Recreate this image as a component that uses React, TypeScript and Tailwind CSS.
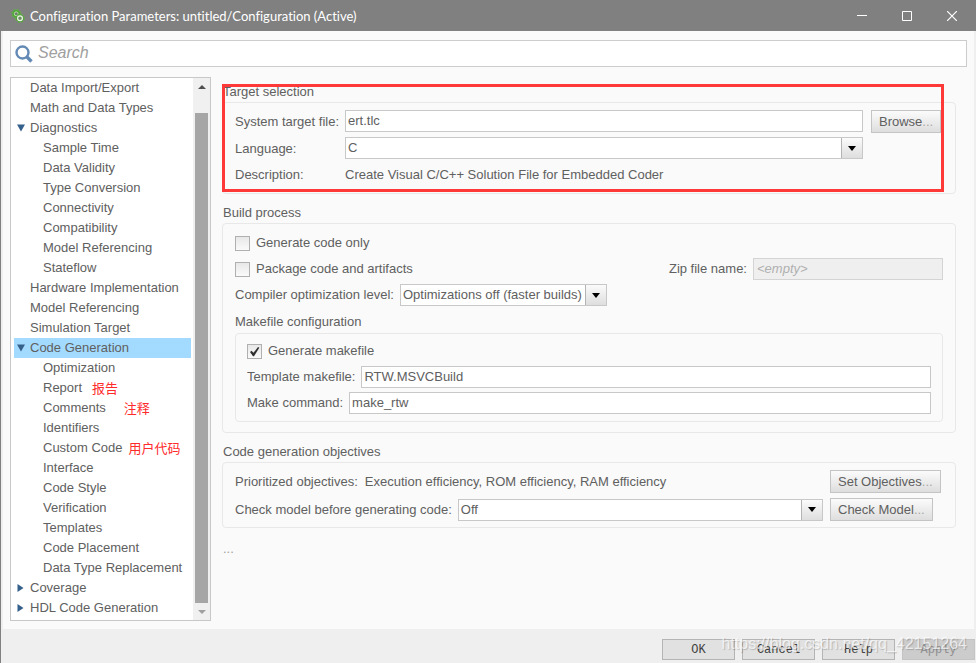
import type { ReactNode } from "react";
import clsx from "clsx";

type TreeItem = {
  label: string;
  level: 1 | 2;
  state?: "open" | "closed";
  selected?: boolean;
  note?: string;
  noteClass?: string;
};

const treeItems: TreeItem[] = [
  { label: "Data Import/Export", level: 1 },
  { label: "Math and Data Types", level: 1 },
  { label: "Diagnostics", level: 1, state: "open" },
  { label: "Sample Time", level: 2 },
  { label: "Data Validity", level: 2 },
  { label: "Type Conversion", level: 2 },
  { label: "Connectivity", level: 2 },
  { label: "Compatibility", level: 2 },
  { label: "Model Referencing", level: 2 },
  { label: "Stateflow", level: 2 },
  { label: "Hardware Implementation", level: 1 },
  { label: "Model Referencing", level: 1 },
  { label: "Simulation Target", level: 1 },
  { label: "Code Generation", level: 1, state: "open", selected: true },
  { label: "Optimization", level: 2 },
  { label: "Report", level: 2, note: "报告", noteClass: "ml-[10px]" },
  { label: "Comments", level: 2, note: "注释", noteClass: "ml-[18px]" },
  { label: "Identifiers", level: 2 },
  { label: "Custom Code", level: 2, note: "用户代码", noteClass: "ml-[6px]" },
  { label: "Interface", level: 2 },
  { label: "Code Style", level: 2 },
  { label: "Verification", level: 2 },
  { label: "Templates", level: 2 },
  { label: "Code Placement", level: 2 },
  { label: "Data Type Replacement", level: 2 },
  { label: "Coverage", level: 1, state: "closed" },
  { label: "HDL Code Generation", level: 1, state: "closed" },
];

const inputClass =
  "h-[22px] min-w-0 flex-1 border border-[#c8c8c8] bg-white px-[2px] pb-px text-[#606060] outline-none";

function TitleBar() {
  return (
    <header className="flex h-[31px] items-center bg-[#808080] pl-[10px] text-white">
      <svg width="14" height="14" viewBox="0 0 14 14" fill="none">
        <circle cx="5.2" cy="4.8" r="4.2" stroke="#5cb543" strokeWidth="1.2" strokeDasharray="1.9 1.4" />
        <circle cx="5.2" cy="4.8" r="3" stroke="#4fa836" strokeWidth="1.8" />
        <circle cx="5.2" cy="4.8" r="1.9" fill="#707a6c" stroke="#c8f0b8" strokeWidth=".8" />
        <circle cx="9" cy="9.2" r="4" stroke="#5cae42" strokeWidth="1.4" strokeDasharray="2 1.14" />
        <circle cx="9" cy="9.2" r="3.5" fill="#4a9a34" />
        <circle cx="9" cy="9.2" r="2.4" fill="#6f8a66" stroke="#eefbe8" strokeWidth="1.2" />
      </svg>
      <h1 className="ml-[5px] flex-1 font-['Lato','Open_Sans',sans-serif] text-[13px] leading-5 [font-variant-ligatures:none]">
        Configuration Parameters: untitled/Configuration (Active)
      </h1>
      <button aria-label="Minimize" className="flex h-full w-[45px] items-center justify-center">
        <svg width="10" height="10" viewBox="0 0 10 10" stroke="white">
          <path d="M0 4.5h10" />
        </svg>
      </button>
      <button aria-label="Maximize" className="flex h-full w-[45px] items-center justify-center">
        <svg width="10" height="10" viewBox="0 0 10 10" stroke="white" fill="none">
          <path d="M.5.5h9v9h-9z" />
        </svg>
      </button>
      <button aria-label="Close" className="mr-[2px] flex h-full w-[45px] items-center justify-center">
        <svg width="10" height="10" viewBox="0 0 10 10" stroke="white" strokeWidth="1.2">
          <path d="M0 0l10 10M10 0L0 10" />
        </svg>
      </button>
    </header>
  );
}

function TreeArrow({ state }: { state?: "open" | "closed" }) {
  return (
    <svg className="mr-[5px] shrink-0" width="8" height="8" viewBox="0 0 8 8" fill="#35608b">
      {state === "open" && <path d="M0 .5h8L4 7.5z" />}
      {state === "closed" && <path d="M0.5 0v8L6.5 4z" />}
    </svg>
  );
}

function Tree() {
  return (
    <nav className="flex w-[201px] shrink-0 border border-[#c8c8c8] bg-white">
      <ul className="min-w-0 flex-1 pb-[2px] pl-[3px] pr-[2px]">
        {treeItems.map((item, i) => (
          <li
            key={i}
            className={clsx(
              "flex h-5 items-center whitespace-nowrap leading-5",
              item.level === 1 ? "pl-[3px]" : "pl-4",
              item.selected && "bg-[#a3daff]"
            )}
          >
            <TreeArrow state={item.state} />
            <span>{item.label}</span>
            {item.note && (
              <span
                className={clsx(
                  "font-['Noto_Sans_CJK_SC',sans-serif] text-[13px] text-[#ff2a2a]",
                  item.noteClass
                )}
              >
                {item.note}
              </span>
            )}
          </li>
        ))}
      </ul>
      {/* Scrollbar */}
      <div className="flex w-[17px] flex-col items-center bg-[#f0f0f0]">
        <div className="flex h-[17px] items-center">
          <svg width="8" height="4" viewBox="0 0 8 4" fill="#505050">
            <path d="M4 0l4 4H0z" />
          </svg>
        </div>
        <div className="mt-[18px] w-[13px] flex-1 bg-[#a6a6a6]" />
        <div className="flex h-[17px] items-center">
          <svg width="8" height="4" viewBox="0 0 8 4" fill="#a0a0a0">
            <path d="M0 0h8L4 4z" />
          </svg>
        </div>
      </div>
    </nav>
  );
}

function Group({ title, className, children }: { title: string; className?: string; children: ReactNode }) {
  return (
    <section>
      <h2 className="h-5 pl-px leading-5">{title}</h2>
      <div className={clsx("flex flex-col rounded border border-[#e8e8e8]", className)}>{children}</div>
    </section>
  );
}

function PushButton({ children }: { children: string }) {
  return (
    <button className="h-[23px] border border-[#c4c4c4] bg-linear-to-b from-[#fbfbfb] to-[#dedede] px-[7px] leading-5 whitespace-nowrap">
      {children}
      <span className="text-[#a8a8a8]">...</span>
    </button>
  );
}

function SelectBox({ id, value, className }: { id: string; value: string; className?: string }) {
  return (
    <div className={clsx("flex h-[22px] border border-[#c8c8c8] bg-white", className)}>
      <select
        id={id}
        defaultValue={value}
        className="min-w-0 flex-1 appearance-none bg-transparent pb-px pl-[2px] text-[#606060] outline-none"
      >
        <option>{value}</option>
      </select>
      <div className="flex w-[21px] items-center justify-center border-l border-[#b4b4b4] bg-linear-to-b from-[#fbfbfb] to-[#dedede]">
        <svg width="8" height="5" viewBox="0 0 8 5" fill="black">
          <path d="M0 0h8L4 5z" />
        </svg>
      </div>
    </div>
  );
}

function CheckRow({ label, checked }: { label: string; checked?: boolean }) {
  return (
    <label className="flex h-[22px] items-center gap-[6px]">
      <span className="grid">
        <input
          type="checkbox"
          defaultChecked={checked}
          className="peer col-start-1 row-start-1 size-[15px] appearance-none border border-[#b0b0b0] bg-linear-to-b from-[#e8e8e8] to-[#fafafa]"
        />
        <svg
          className="pointer-events-none invisible col-start-1 row-start-1 peer-checked:visible"
          width="15"
          height="15"
          viewBox="0 0 15 15"
          fill="#303030"
        >
          <path d="M3 8l1.5-1.2 2 2L11 3l1.3.8L7 12.2H6z" />
        </svg>
      </span>
      {label}
    </label>
  );
}

function TextRow({ id, label, value }: { id: string; label: string; value: string }) {
  return (
    <div className="flex h-[22px] items-center gap-[6px]">
      <label htmlFor={id}>{label}</label>
      <input id={id} defaultValue={value} className={inputClass} />
    </div>
  );
}

export default function App() {
  return (
    <div className="flex min-h-screen flex-col border-l border-[#808080] bg-[#efefef] font-['Liberation_Sans',Arial,sans-serif] text-[13px] text-[#606060]">
      <TitleBar />

      <main className="mx-[2px] bg-[#fafafa] px-[7px] pb-2 pt-[9px]">
        <div className="flex h-[27px] items-center border border-[#cccccc] bg-white pl-1">
          <svg width="18" height="18" viewBox="0 0 18 18" fill="none" stroke="#6389b5">
            <circle cx="7.5" cy="7.5" r="6" strokeWidth="2.4" />
            <path d="M12 12l4.5 4.5" strokeWidth="3.4" />
          </svg>
          <input
            aria-label="Search"
            placeholder="Search"
            className="ml-[5px] min-w-0 flex-1 pb-px text-[16px] italic leading-5 outline-none placeholder:text-[#a0a0a0]"
          />
        </div>

        <div className="mt-[10px] flex gap-[11px]">
          <Tree />

          <div className="relative flex min-w-0 flex-1 flex-col gap-[9px] pr-[11px] pt-[5px]">
            <Group title="Target selection" className="gap-[5px] py-[7px] pl-3 pr-[14px]">
              <div className="flex h-[22px]">
                <label htmlFor="target-file" className="w-[110px] leading-6">System target file:</label>
                <input id="target-file" defaultValue="ert.tlc" className={inputClass} />
                <div className="w-[78px] pl-2">
                  <PushButton>Browse</PushButton>
                </div>
              </div>
              <div className="flex h-[22px]">
                <label htmlFor="language" className="w-[110px] leading-6">Language:</label>
                <SelectBox id="language" value="C" className="min-w-0 flex-1" />
                <div className="w-[78px]" />
              </div>
              <div className="flex h-[22px] items-center">
                <span className="w-[110px]">Description:</span>
                <span>Create Visual C/C++ Solution File for Embedded Coder</span>
              </div>
            </Group>

            <Group title="Build process" className="px-3 pb-[10px] pt-2">
              <div className="flex flex-col gap-1">
                <CheckRow label="Generate code only" />
                <div className="flex items-center justify-between">
                  <CheckRow label="Package code and artifacts" />
                  <div className="flex items-center gap-[6px]">
                    <label htmlFor="zip-name">Zip file name:</label>
                    <input
                      id="zip-name"
                      disabled
                      placeholder="<empty>"
                      className="h-[22px] w-[190px] border border-[#d4d4d4] bg-[#efefef] px-[3px] pb-px italic placeholder:text-[#b0b0b0]"
                    />
                  </div>
                </div>
                <div className="flex items-center gap-[6px]">
                  <label htmlFor="opt-level">Compiler optimization level:</label>
                  <SelectBox id="opt-level" value="Optimizations off (faster builds)" className="w-[207px]" />
                </div>
              </div>

              <h3 className="mt-[6px] h-[21px] leading-5">Makefile configuration</h3>
              <div className="flex flex-col gap-1 rounded border border-[#e8e8e8] px-[11px] pb-[7px] pt-[6px]">
                <CheckRow label="Generate makefile" checked />
                <TextRow id="template" label="Template makefile:" value="RTW.MSVCBuild" />
                <TextRow id="make-command" label="Make command:" value="make_rtw" />
              </div>
            </Group>

            <Group title="Code generation objectives" className="gap-[5px] pb-[6px] pl-3 pr-[15px] pt-[7px]">
              <div className="flex items-center">
                <div className="flex flex-1 gap-[7px]">
                  <span>Prioritized objectives:</span>
                  <span>Execution efficiency, ROM efficiency, RAM efficiency</span>
                </div>
                <div className="w-[117px] pl-[7px]">
                  <PushButton>Set Objectives</PushButton>
                </div>
              </div>
              <div className="flex items-center">
                <div className="flex flex-1 items-center gap-[6px]">
                  <label htmlFor="check-model">Check model before generating code:</label>
                  <SelectBox id="check-model" value="Off" className="min-w-0 flex-1" />
                </div>
                <div className="w-[117px] pl-[7px]">
                  <PushButton>Check Model</PushButton>
                </div>
              </div>
            </Group>

            <p className="pl-px leading-6 text-[#a0a0a0]">...</p>

            {/* Highlight frame over the target settings */}
            <div className="pointer-events-none absolute left-0 right-[23px] top-[7px] h-[108px] border-3 border-[#ff3838]" />
          </div>
        </div>
      </main>

      <footer className="relative flex justify-end gap-[7px] pb-[3px] pt-[10px] pr-px font-['Liberation_Mono',monospace] text-[12px] text-[#404040]">
        <button className="h-[21px] w-[73px] border border-[#b4b4b4] bg-[#e1e1e1]">OK</button>
        <button className="h-[21px] w-[73px] border border-[#b4b4b4] bg-[#e1e1e1]">Cancel</button>
        <button className="h-[21px] w-[73px] border border-[#b4b4b4] bg-[#e1e1e1]">Help</button>
        <button disabled className="h-[21px] w-[73px] border border-[#c4c4c4] bg-[#cccccc] text-[#909090]">Apply</button>
        <span className="pointer-events-none absolute right-[9px] top-[5px] font-['Liberation_Sans',Arial,sans-serif] text-[16px] leading-5 text-white/70 text-shadow-[1px_1px_1px_#00000030]">
          https://blog.csdn.net/qq_42151264
        </span>
      </footer>
    </div>
  );
}
